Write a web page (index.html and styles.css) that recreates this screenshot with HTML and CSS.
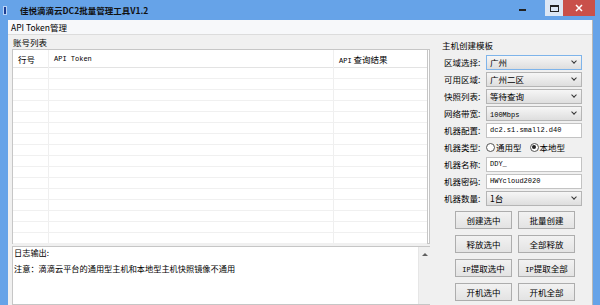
FILE: index.html
```html
<!DOCTYPE html>
<html lang="zh-CN">
<head>
  <meta charset="UTF-8">
  <title>佳悦滴滴云DC2批量管理工具V1.2</title>
  <link rel="stylesheet" href="styles.css">
</head>
<body>
<div class="window">
  <div class="titlebar">
    <span class="app-icon"></span>
    <span class="title">佳悦滴滴云DC2批量管理工具V1.2</span>
    <div class="caption-btns">
      <span class="cap cap-min"><i></i></span>
      <span class="cap cap-max"><i></i></span>
      <span class="cap cap-close">
        <svg width="8" height="8" viewBox="0 0 8 8"><path d="M1 1L7 7M7 1L1 7" stroke="#fff" stroke-width="1.5"/></svg>
      </span>
    </div>
  </div>

  <div class="client">
    <div class="menubar"><span class="menu-item">API Token管理</span></div>

    <div class="main">
      <div class="left">
        <div class="group-label">账号列表</div>
        <div class="grid">
          <div class="grid-head">
            <div class="col c1">行号</div>
            <div class="col c2 mono">API Token</div>
            <div class="col c3"><span class="mono">API</span> 查询结果</div>
          </div>
          <div class="grid-body">
            <div class="row"><div class="col c1"></div><div class="col c2"></div><div class="col c3"></div></div>
            <div class="row"><div class="col c1"></div><div class="col c2"></div><div class="col c3"></div></div>
            <div class="row"><div class="col c1"></div><div class="col c2"></div><div class="col c3"></div></div>
            <div class="row"><div class="col c1"></div><div class="col c2"></div><div class="col c3"></div></div>
            <div class="row"><div class="col c1"></div><div class="col c2"></div><div class="col c3"></div></div>
            <div class="row"><div class="col c1"></div><div class="col c2"></div><div class="col c3"></div></div>
            <div class="row"><div class="col c1"></div><div class="col c2"></div><div class="col c3"></div></div>
            <div class="row"><div class="col c1"></div><div class="col c2"></div><div class="col c3"></div></div>
            <div class="row"><div class="col c1"></div><div class="col c2"></div><div class="col c3"></div></div>
            <div class="row"><div class="col c1"></div><div class="col c2"></div><div class="col c3"></div></div>
            <div class="row"><div class="col c1"></div><div class="col c2"></div><div class="col c3"></div></div>
            <div class="row"><div class="col c1"></div><div class="col c2"></div><div class="col c3"></div></div>
            <div class="row"><div class="col c1"></div><div class="col c2"></div><div class="col c3"></div></div>
            <div class="row"><div class="col c1"></div><div class="col c2"></div><div class="col c3"></div></div>
            <div class="row"><div class="col c1"></div><div class="col c2"></div><div class="col c3"></div></div>
            <div class="row"><div class="col c1"></div><div class="col c2"></div><div class="col c3"></div></div>
          </div>
        </div>

        <div class="log">
          <div class="log-text">
            <div class="log-line">日志输出:</div>
            <div class="log-line note">注意：滴滴云平台的通用型主机和本地型主机快照镜像不通用</div>
          </div>
          <div class="scrollbar"><span class="arrow-up"></span></div>
        </div>
      </div>

      <div class="right">
        <div class="group-label">主机创建模板</div>
        <div class="form">
          <div class="field"><label>区域选择:</label><div class="select focus">广州<span class="chev"></span></div></div>
          <div class="field"><label>可用区域:</label><div class="select">广州二区<span class="chev"></span></div></div>
          <div class="field"><label>快照列表:</label><div class="select">等待查询<span class="chev"></span></div></div>
          <div class="field"><label>网络带宽:</label><div class="select"><span class="mono">100Mbps</span><span class="chev"></span></div></div>
          <div class="field"><label>机器配置:</label><div class="input mono">dc2.s1.small2.d40</div></div>
          <div class="field"><label>机器类型:</label>
            <div class="radios">
              <span class="radio"><span class="dot"></span>通用型</span>
              <span class="radio"><span class="dot on"></span>本地型</span>
            </div>
          </div>
          <div class="field"><label>机器名称:</label><div class="input mono">DDY_</div></div>
          <div class="field"><label>机器密码:</label><div class="input mono">HWYcloud2020</div></div>
          <div class="field"><label>机器数量:</label><div class="select">1台<span class="chev"></span></div></div>
        </div>
        <div class="buttons">
          <button class="btn">创建选中</button>
          <button class="btn">批量创建</button>
          <button class="btn">释放选中</button>
          <button class="btn">全部释放</button>
          <button class="btn"><span class="mono">IP</span>提取选中</button>
          <button class="btn"><span class="mono">IP</span>提取全部</button>
          <button class="btn">开机选中</button>
          <button class="btn">开机全部</button>
        </div>
      </div>
    </div>
  </div>
</div>
</body>
</html>
```

FILE: styles.css
```css
* {
  box-sizing: border-box;
}
html, body {
  margin: 0;
  height: 100%;
  overflow: hidden;
}
body {
  font-family: "Noto Sans CJK SC", "Noto Sans", sans-serif;
  font-size: 8.5px;
  color: #000;
  background: #fff;
}
.mono {
  font-family: "Liberation Mono", "DejaVu Sans Mono", monospace;
  font-size: 7px;
}
.window {
  width: 600px;
  height: 305px;
  background: #66a3e8;
  padding: 0 7px 0 8px;
  display: flex;
  flex-direction: column;
}
.titlebar {
  height: 20px;
  display: flex;
  align-items: center;
  flex-shrink: 0;
}
.app-icon {
  width: 4px;
  height: 9px;
  background: #1d3f94;
  margin-left: -5px;
  margin-right: 13px;
  border: 1px solid #b9d3f5;
}
.title {
  font-weight: bold;
  font-size: 8.5px;
  color: #111;
}
.caption-btns {
  margin-left: auto;
  display: flex;
  align-self: flex-start;
  margin-right: -2px;
}
.cap {
  height: 16px;
  display: flex;
  align-items: center;
  justify-content: center;
}
.cap-min {
  width: 26px;
  justify-content: flex-start;
}
.cap-min i {
  width: 7px;
  height: 2px;
  background: #222;
  margin-top: 4px;
}
.cap-max {
  width: 18px;
  background: #dce7f5;
}
.cap-max i {
  width: 9px;
  height: 7px;
  border: 1px solid #222;
  border-top-width: 2px;
}
.cap-close {
  width: 32px;
  background: #c9504a;
}
.client {
  flex: 1;
  background: #f0f0f0;
  display: flex;
  flex-direction: column;
  border-right: 1px solid #b8b8b8;
}
.menubar {
  height: 15px;
  background: #f7f8fa;
  border-bottom: 1px solid #dcdcdc;
  display: flex;
  align-items: center;
  padding-left: 3px;
}
.menu-item {
  line-height: 1;
}
.main {
  flex: 1;
  display: flex;
  padding: 2px 0 0 4px;
}
.left {
  width: 418px;
  display: flex;
  flex-direction: column;
}
.group-label {
  line-height: 11px;
  padding-left: 1px;
  height: 12px;
}
.grid {
  height: 195px;
  background: #fff;
  border: 1px solid #c6c6c6;
  border-right: 3px double #c6c6c6;
}
.grid-head, .row {
  display: flex;
}
.grid-head {
  height: 18px;
  border-bottom: 1px solid #e3e3e3;
  align-items: center;
}
.grid-head .col {
  height: 18px;
  line-height: 18px;
  padding-left: 5px;
}
.row {
  height: 11px;
  border-bottom: 1px solid #f0f0f0;
}
.col {
  border-right: 1px solid #efefef;
}
.c1 { width: 36px; }
.c2 { width: 285px; }
.c3 { width: 92px; border-right: none; }
.log {
  flex: 1;
  margin-top: 2px;
  background: #fff;
  border: 1px solid #c6c6c6;
  border-right: none;
  display: flex;
}
.log-text {
  flex: 1;
  padding: 0 0 0 1px;
}
.log-line {
  line-height: 11px;
  font-size: 8.2px;
}
.note {
  margin-top: 5px;
}
.scrollbar {
  width: 12px;
  background: #f0f0f0;
  border-left: 1px solid #e6e6e6;
  display: flex;
  justify-content: center;
  padding-top: 6px;
}
.arrow-up {
  width: 0;
  height: 0;
  border-left: 3px solid transparent;
  border-right: 3px solid transparent;
  border-bottom: 3px solid #606060;
}
.right {
  flex: 1;
  padding: 3px 0 0 12px;
}
.right .group-label {
  padding-left: 0;
  margin-bottom: 2px;
}
.form {
  display: flex;
  flex-direction: column;
  gap: 1px;
}
.field {
  display: flex;
  align-items: center;
  height: 16px;
}
.field label {
  width: 44px;
  padding-left: 2px;
  white-space: nowrap;
}
.select, .input {
  width: 96px;
  height: 15px;
  line-height: 13px;
  padding-left: 3px;
  border: 1px solid #b5b5b5;
  position: relative;
  white-space: nowrap;
}
.select {
  background: linear-gradient(#f6f6f6, #dedede);
}
.select.focus {
  border-color: #7eb4ea;
}
.input {
  background: #fff;
  border-color: #c3c3c3;
}
.chev {
  position: absolute;
  right: 5px;
  top: 3px;
  width: 4px;
  height: 4px;
  border-right: 1.5px solid #333;
  border-bottom: 1.5px solid #333;
  transform: rotate(45deg);
}
.radios {
  display: flex;
  gap: 8px;
}
.radio {
  display: flex;
  align-items: center;
}
.dot {
  width: 9px;
  height: 9px;
  border: 1px solid #555;
  border-radius: 50%;
  background: #fff;
  margin-right: 1px;
  display: flex;
  align-items: center;
  justify-content: center;
}
.dot.on::after {
  content: "";
  width: 4px;
  height: 4px;
  border-radius: 50%;
  background: #222;
}
.buttons {
  display: grid;
  grid-template-columns: 57px 57px;
  column-gap: 6px;
  row-gap: 6px;
  margin: 5px 0 0 13px;
}
.btn {
  height: 18px;
  padding: 0;
  font-family: inherit;
  font-size: 8.5px;
  color: #000;
  background: linear-gradient(#f2f2f2, #e3e3e3);
  border: 1px solid #adadad;
}
.btn .mono {
  font-size: 7px;
}
```
